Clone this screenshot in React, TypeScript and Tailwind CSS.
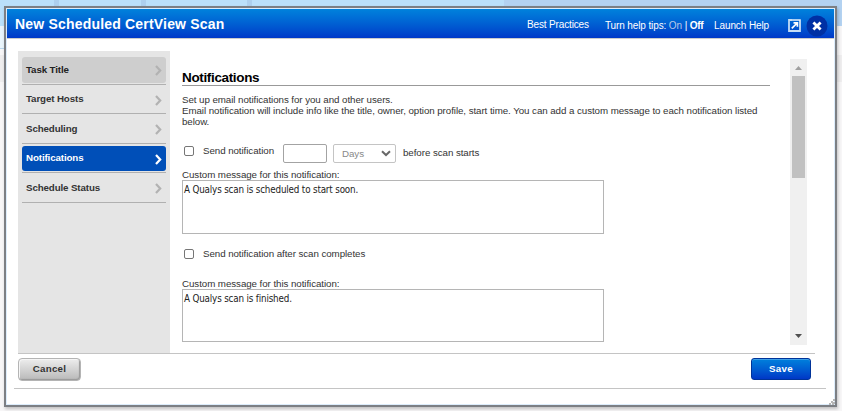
import React from "react";

const steps = [
  { label: "Task Title", state: "visited" },
  { label: "Target Hosts", state: "idle" },
  { label: "Scheduling", state: "idle" },
  { label: "Notifications", state: "active" },
  { label: "Schedule Status", state: "idle" },
];

const boxes: Record<string, string> = {
  visited: "bg-[#cecece] text-[#222]",
  idle: "text-[#333]",
  active: "bg-[#004fb8] text-white",
};

function Chevron({ active }: { active: boolean }) {
  return (
    <svg width="7" height="11" viewBox="0 0 7 11" fill="none" className="mt-0.5">
      <path d="M1 1L5.2 5.5L1 10" stroke={active ? "#fff" : "#b2b2b2"} strokeWidth="2.2" />
    </svg>
  );
}

function Sidebar() {
  return (
    <nav className="h-[302px] w-[152px] shrink-0 bg-[#e5e5e5] px-1 pt-[4px]">
      {steps.map((s) => (
        <div key={s.label} className="h-[29.5px] border-b border-[#b0b0b0] pt-[2px] text-[9.75px] font-bold">
          <div className={`flex h-[25.5px] items-center justify-between rounded-[3px] pr-[4px] pl-[4px] ${boxes[s.state]}`}>
            <span className="pt-px tracking-[-0.12px]">{s.label}</span>
            <Chevron active={s.state === "active"} />
          </div>
        </div>
      ))}
    </nav>
  );
}

function Check() {
  return <span className="h-[10px] w-[10px] shrink-0 rounded-[2px] border border-[#767676] bg-white" />;
}

function Message({ text, height }: { text: string; height: string }) {
  return (
    <div className={`${height} w-[422px] border border-[#b5b5b5] pt-[3px] pl-[1px] font-['DejaVu_Sans_Condensed','DejaVu_Sans',sans-serif] text-[9.75px] leading-[12px] tracking-[-0.16px] text-[#222]`}>
      {text}
    </div>
  );
}

function Header() {
  return (
    <header className="flex h-[29px] items-start bg-linear-to-b from-[#0082dc] to-[#0038c8] text-[10px] leading-[12px] tracking-[-0.05px] text-white">
      <h1 className="mt-[7px] ml-[8px] w-[512px] text-[14px] leading-[16px] font-bold tracking-[0.19px] whitespace-nowrap">
        New Scheduled CertView Scan
      </h1>
      <span className="mt-[10px] w-[78px] tracking-[-0.15px] whitespace-nowrap">Best Practices</span>
      <span className="mt-[11px] w-[109px] tracking-[-0.12px] whitespace-nowrap">
        Turn help tips: <span className="text-[#b9c9e8]">On</span> | <b className="tracking-[-0.3px]">Off</b>
      </span>
      <span className="mt-[11px] w-[74px] tracking-[-0.1px] whitespace-nowrap">Launch Help</span>
      <svg width="13" height="13" viewBox="0 0 13 13" className="mt-[10px]" fill="none">
        <path d="M4 1H1V12H12V9" stroke="#c4dcf6" strokeWidth="1.8" />
        <path d="M4 1H12V9" stroke="#e6f1fc" strokeWidth="1.6" />
        <path d="M5.5 3.8H9.4V7.7M9.2 4L3.8 9.4" stroke="#fff" strokeWidth="1.7" />
      </svg>
      <svg width="22" height="22" viewBox="0 0 22 22" className="mt-[6px] ml-[5px]">
        <circle cx="11" cy="11" r="10.5" fill="#0030a4" />
        <path d="M7.4 7.4L14.6 14.6M14.6 7.4L7.4 14.6" stroke="#fff" strokeWidth="2.8" />
      </svg>
    </header>
  );
}

function Scrollbar() {
  return (
    <div className="mt-[8px] ml-[20px] flex h-[286px] w-[17px] flex-col items-center bg-[#f0f0f0]">
      <svg width="17" height="17" viewBox="0 0 17 17">
        <path d="M5 11L8.5 7L12 11Z" fill="#a0a0a0" />
      </svg>
      <div className="h-[102px] w-[13px] bg-[#c1c1c1]" />
      <svg width="17" height="17" viewBox="0 0 17 17" className="mt-auto">
        <path d="M5 6H12L8.5 10Z" fill="#505050" />
      </svg>
    </div>
  );
}

function Panel() {
  return (
    <main className="ml-[12px] w-[588px] text-[9.75px] leading-[11px] tracking-[-0.065px] text-[#333]">
      <h2 className="mt-[18px] h-[17px] border-b border-[#999] text-[13.5px] leading-[17px] font-bold tracking-[-0.35px] text-black">
        Notifications
      </h2>
      <p className="mt-[8px] whitespace-nowrap">
        Set up email notifications for you and other users.
        <br />
        Email notification will include info like the title, owner, option profile, start time. You can add a custom message to each notification listed
        <br />
        below.
      </p>
      <div className="mt-[17px] flex h-[20px] items-start">
        <div className="mt-[2px] ml-[2px] flex w-[99px] gap-[9px]">
          <Check />
          <span className="-mt-px whitespace-nowrap">Send notification</span>
        </div>
        <div className="h-[19px] w-[44px] rounded-[2px] border border-[#a3a3a3]" />
        <div className="ml-[6px] flex h-[19px] w-[63px] items-center justify-between rounded-[2px] border border-[#c4c4c4] pr-[4px] pl-[8px] text-[#888]">
          <span>Days</span>
          <svg width="10" height="7" viewBox="0 0 10 7" fill="none">
            <path d="M1 1.2L5 5L9 1.2" stroke="#686868" strokeWidth="2" />
          </svg>
        </div>
        <span className="mt-[3px] ml-[7px]">before scan starts</span>
      </div>
      <p className="mt-[5px] h-[11px]">Custom message for this notification:</p>
      <Message text="A Qualys scan is scheduled to start soon." height="h-[54px]" />
      <div className="mt-[15px] ml-[2px] flex h-[11px] gap-[9px]">
        <Check />
        <span className="-mt-px">Send notification after scan completes</span>
      </div>
      <p className="mt-[18px] h-[11px]">Custom message for this notification:</p>
      <Message text="A Qualys scan is finished." height="h-[53px]" />
    </main>
  );
}

function Footer() {
  return (
    <footer className="mr-[8px] ml-[7px] flex h-[35px] items-start justify-between border-b border-[#c4c4c4] pt-[4px] pr-[15px] pl-[4px] text-[9.75px] font-bold tracking-[0.25px]">
      <button className="h-[23px] w-[63px] rounded-[4px] border border-[#b4b4b4] bg-linear-to-b from-[#ededed] to-[#b9b9b9] text-[#333] shadow-[inset_-1px_-1px_1px_#999,inset_1px_1px_0_#f5f5f5]">
        Cancel
      </button>
      <button className="h-[22px] w-[60px] rounded-[3px] border border-[#003399] bg-linear-to-b from-[#0080dc] to-[#0036c6] pt-px text-white shadow-[inset_0_1px_0_#3fa0e8]">
        Save
      </button>
    </footer>
  );
}

export default function App() {
  return (
    <div className="relative h-[411px] w-[842px] overflow-hidden bg-[#f7f6f7] font-['Liberation_Sans',Arial,sans-serif]">
      <div className="flex h-[26px] bg-[#b3d2f1]">
        <div className="flex w-[252px] gap-[5px] bg-[#add0ee]">
          <div className="w-[54px] bg-[#bae0fa]" />
          <div className="w-[82px] bg-[#bae0fa]" />
          <div className="w-[101px] bg-[#bae0fa]" />
        </div>
        <div className="w-[252px] bg-[#bae0fa]" />
      </div>
      <div className="flex h-[29px] justify-between">
        <div className="h-[23px] w-[5px] border-b border-[#b8d6ed] bg-[#eaf5fc]" />
      </div>
      <div className="h-[27px] bg-[#eeedee]" />

      <div className="absolute top-[6px] left-[4px] h-[401px] w-[833px] border-2 border-[#7c7f84] bg-white shadow-[1px_2px_3px_rgba(0,0,0,0.22)]">
        <div className="h-full border border-[#dcecfb]">
          <Header />
          <div className="border-t border-[#ccc]" />
          <section className="mr-[19px] ml-[11px] mt-[12px] flex h-[303px] border-b border-[#c4c4c4]">
            <Sidebar />
            <Panel />
            <Scrollbar />
          </section>
          <Footer />
        </div>
        <svg width="6" height="6" viewBox="0 0 6 6" className="absolute right-0 bottom-0">
          <path d="M4 0h2v2h-2zM2 2h2v2h-2zM4 3h2v2h-2zM0 4h2v2h-2zM3 4h2v2h-2z" fill="#b5b5b5" />
        </svg>
      </div>
    </div>
  );
}
